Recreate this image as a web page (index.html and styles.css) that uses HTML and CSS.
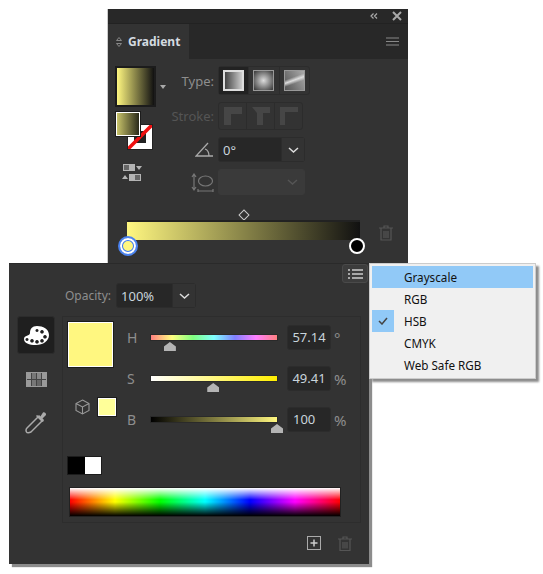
FILE: index.html
```html
<!DOCTYPE html>
<html lang="en">
<head>
    <meta charset="UTF-8">
    <title>Gradient panel</title>
    <link rel="stylesheet" href="styles.css">
</head>
<body>
    <div class="panel gradient-panel">
        <div class="titlebar">
            <svg class="collapse" width="8" height="6" viewBox="0 0 8 6"><path d="M3.5 0.5 L1 3 L3.5 5.5 M7 0.5 L4.5 3 L7 5.5" fill="none" stroke="#aaa" stroke-width="1.2"/></svg>
            <svg class="close" width="10" height="10" viewBox="0 0 10 10"><path d="M1 1 L9 9 M9 1 L1 9" stroke="#aaa" stroke-width="2"/></svg>
        </div>
        <div class="tabbar">
            <div class="tab">
                <svg width="6" height="10" viewBox="0 0 6 10"><path d="M3 0.5 L5.5 3.5 H0.5 Z M3 9.5 L5.5 6.5 H0.5 Z" fill="none" stroke="#888"/></svg>
                <span>Gradient</span>
            </div>
            <svg class="hamburger" width="13" height="9" viewBox="0 0 13 9"><path d="M0 1 H13 M0 4.5 H13 M0 8 H13" stroke="#888" stroke-width="1.2"/></svg>
        </div>

        <div class="grad-top">
            <div class="swatch-col">
                <div class="big-row">
                    <div class="grad-swatch"></div>
                    <span class="caret"></span>
                </div>
                <div class="fill-stroke">
                    <div class="stroke-box">
                        <svg width="24" height="24" viewBox="0 0 24 24"><rect x="6" y="6" width="12" height="12" fill="#222"/><path d="M0 24 L24 0" stroke="#f01010" stroke-width="3.5"/></svg>
                    </div>
                    <div class="fill-box"></div>
                </div>
                <svg class="swap" width="20" height="19" viewBox="0 0 20 19">
                    <rect x="1" y="1" width="12" height="7" fill="#b4b4b4"/><rect x="2" y="2" width="5" height="5" fill="#666"/>
                    <path d="M14 3 H20 L17 7 Z" fill="#b4b4b4"/>
                    <rect x="7" y="11" width="12" height="7" fill="#b4b4b4"/><rect x="13" y="12" width="5" height="5" fill="#666"/>
                    <path d="M0 16 H6 L3 12 Z" fill="#b4b4b4"/>
                </svg>
            </div>
            <div class="controls">
                <label class="ctl-label type-label">Type:</label>
                <div class="btn-group">
                    <div class="type-btn selected"><div class="type-icon linear"></div></div>
                    <div class="type-btn"><div class="type-icon radial"></div></div>
                    <div class="type-btn"><div class="type-icon freeform"></div></div>
                </div>
                <label class="ctl-label stroke-label">Stroke:</label>
                <div class="btn-group disabled">
                    <div class="stroke-btn"><svg width="20" height="20" viewBox="0 0 20 20"><path d="M1 19 V1 H19 V8 H8 V19 Z" fill="#464646"/></svg></div>
                    <div class="stroke-btn"><svg width="20" height="20" viewBox="0 0 20 20"><path d="M1 1 H19 V7 H12 V19 H6 V7 Z" fill="#464646"/></svg></div>
                    <div class="stroke-btn"><svg width="20" height="20" viewBox="0 0 20 20"><path d="M1 19 V1 H19 V6 H6 V19 Z" fill="#464646"/></svg></div>
                </div>
                <svg class="ctl-icon" width="19" height="15" viewBox="0 0 19 15"><path d="M13 1 L1 14 H18 M10 7 C13 8 14 11 14 14" fill="none" stroke="#aaa" stroke-width="1.3"/></svg>
                <div class="combo">
                    <span class="combo-value">0°</span>
                    <span class="combo-arrow"><svg width="11" height="6" viewBox="0 0 11 6"><path d="M1 1 L5.5 5 L10 1" fill="none" stroke="#ddd" stroke-width="1.5"/></svg></span>
                </div>
                <svg class="ctl-icon" width="23" height="19" viewBox="0 0 23 19"><path d="M3 1 V17 M1 4 L3 1 L5 4 M1 14 L3 17 L5 14 M7 18 H22 M7 16 V19 M22 16 V19" fill="none" stroke="#777" stroke-width="1.2"/><ellipse cx="14.500" cy="8" rx="7" ry="5" fill="none" stroke="#777" stroke-width="1.2"/></svg>
                <div class="combo off">
                    <span class="combo-arrow"><svg width="11" height="6" viewBox="0 0 11 6"><path d="M1 1 L5.5 5 L10 1" fill="none" stroke="#555" stroke-width="1.5"/></svg></span>
                </div>
            </div>
        </div>

        <div class="slider-wrap">
            <div class="midpoint"></div>
            <div class="bar-row">
                <div class="grad-bar">
                    <span class="stop stop-start"></span>
                    <span class="stop stop-end"></span>
                </div>
                <svg class="trash" width="14" height="16" viewBox="0 0 14 16"><path d="M0 3 H14 M5 3 V1 H9 V3 M2 3 V15 H12 V3 M5 6 V13 M7 6 V13 M9 6 V13" fill="none" stroke="#555" stroke-width="1.2"/></svg>
            </div>
        </div>
    </div>

    <div class="panel color-panel">
        <div class="list-row">
            <div class="list-btn">
                <svg width="15" height="10" viewBox="0 0 15 10"><path d="M0 1 H2 M4 1 H15 M0 5 H2 M4 5 H15 M0 9 H2 M4 9 H15" stroke="#ccc" stroke-width="1.6"/></svg>
            </div>
        </div>
        <div class="opacity-row">
            <label class="ctl-label opacity-label">Opacity:</label>
            <div class="combo opacity-combo">
                <span class="combo-value">100%</span>
                <span class="combo-arrow"><svg width="11" height="6" viewBox="0 0 11 6"><path d="M1 1 L5.500 5 L10 1" fill="none" stroke="#ddd" stroke-width="1.5"/></svg></span>
            </div>
        </div>
        <div class="main-row">
            <div class="side-nav">
                <div class="nav-btn selected">
                    <svg width="25" height="19" viewBox="0 0 25 19">
                        <path fill="#fff" fill-rule="evenodd" d="M13 0 C19 0 25 3 25 9 C25 15 19 19 12 19 C5 19 0 17 0 13 C0 9 6 10 6 7 C6 3 8 0 13 0 Z M13 3 a1.500 1.500 0 1 0 .01 0 Z M18 4 a1.800 1.800 0 1 0 .01 0 Z M21 9 a1.800 1.800 0 1 0 .01 0 Z M18 13 a1.800 1.800 0 1 0 .01 0 Z M13 14 a1.800 1.800 0 1 0 .01 0 Z M8 13 a1.800 1.800 0 1 0 .01 0 Z M3 12 a1.500 1.500 0 1 0 .01 0 Z"/>
                    </svg>
                </div>
                <div class="nav-grid">
                    <span></span><span class="mid"></span><span class="soft"></span><span></span>
                    <span></span><span class="mid"></span><span class="deep"></span><span></span>
                </div>
                <svg class="dropper" width="22" height="23" viewBox="0 0 22 23"><path d="M14 5 L18 9 L6 21 C4 22 2 22 1.500 21 C1 20 1 18 2 17 Z" fill="none" stroke="#aaa" stroke-width="1.5"/><path d="M12 4 L15 6 L18 1.500 C19 0.500 21.500 2 21 4 L17 8 L19 10 L17 11 L11 5 Z" fill="#aaa"/></svg>
            </div>
            <div class="color-box">
                <div class="color-top">
                    <div class="preview-col">
                        <div class="big-color"></div>
                        <div class="websafe">
                            <svg width="15" height="16" viewBox="0 0 15 16"><path d="M7.500 1 L14 4.500 V11.500 L7.500 15 L1 11.500 V4.500 Z M1 4.500 L7.500 8 L14 4.500 M7.500 8 V15" fill="none" stroke="#999" stroke-width="1.100"/></svg>
                            <div class="small-color"></div>
                        </div>
                    </div>
                    <div class="sliders">
                        <div class="slider-row">
                            <span class="chan">H</span>
                            <div class="track hue"><span class="thumb" style="left: 15%"></span></div>
                            <div class="num">57.14</div>
                            <span class="unit">°</span>
                        </div>
                        <div class="slider-row">
                            <span class="chan">S</span>
                            <div class="track sat"><span class="thumb" style="left: 49.41%"></span></div>
                            <div class="num">49.41</div>
                            <span class="unit">%</span>
                        </div>
                        <div class="slider-row">
                            <span class="chan">B</span>
                            <div class="track bri"><span class="thumb" style="left: 100%"></span></div>
                            <div class="num num-left">100</div>
                            <span class="unit">%</span>
                        </div>
                    </div>
                </div>
                <div class="bw"><span class="bw-black"></span><span class="bw-white"></span></div>
                <div class="spectrum"></div>
            </div>
        </div>
        <div class="footer">
            <svg width="14" height="14" viewBox="0 0 14 14"><rect x="0.500" y="0.500" width="13" height="13" fill="none" stroke="#aaa"/><path d="M7 3.500 V10.500 M3.500 7 H10.500" stroke="#ccc" stroke-width="1.500"/></svg>
            <svg width="14" height="15" viewBox="0 0 14 15"><path d="M0 3 H14 M5 3 V1 H9 V3 M2 3 V14.500 H12 V3 M5 6 V12.500 M7 6 V12.500 M9 6 V12.500" fill="none" stroke="#555" stroke-width="1.200"/></svg>
        </div>
    </div>

    <div class="menu">
        <div class="menu-item active"><span class="check"></span>Grayscale</div>
        <div class="menu-item"><span class="check"></span>RGB</div>
        <div class="menu-item"><span class="check on"><svg width="10" height="8" viewBox="0 0 10 8"><path d="M1 4 L4 7 L9 1" fill="none" stroke="#444" stroke-width="1.500"/></svg></span>HSB</div>
        <div class="menu-item"><span class="check"></span>CMYK</div>
        <div class="menu-item"><span class="check"></span>Web Safe RGB</div>
    </div>
</body>
</html>
```

FILE: styles.css
```css
* {
    box-sizing: border-box;
}
body {
    margin: 0;
    background-color: white;
    font-family: "Noto Sans", Arial, sans-serif;
    font-size: 12px;
    overflow: hidden;
}
.panel {
    position: absolute;
    background-color: #333;
}
svg {
    display: block;
    flex: none;
}

/* top panel */
.gradient-panel {
    left: 108px;
    top: 9px;
    width: 300px;
    height: 255px;
    box-shadow: -1px 0 0 #ccc;
}
.titlebar {
    display: flex;
    justify-content: flex-end;
    align-items: center;
    gap: 14px;
    height: 15px;
    padding-right: 6px;
    background-color: #282828;
    border-bottom: 1px solid #222;
}
.tabbar {
    display: flex;
    justify-content: space-between;
    align-items: center;
    height: 35px;
    padding-right: 9px;
    background-color: #282828;
}
.tab {
    display: flex;
    align-items: center;
    gap: 6px;
    width: 81px;
    height: 100%;
    padding-left: 8px;
    background-color: #333;
    color: #d4dbe0;
    font-weight: bold;
}
.grad-top {
    display: flex;
    padding: 7px 0 0 7px;
    height: 136px;
}
.swatch-col {
    width: 54px;
}
.big-row {
    display: flex;
    align-items: center;
    gap: 4px;
}
.grad-swatch {
    width: 41px;
    height: 41px;
    border: 2px solid #1c1c1c;
    background: linear-gradient(to right, #fff780, #111);
}
.caret {
    width: 0;
    height: 0;
    border-left: 3.5px solid transparent;
    border-right: 3.5px solid transparent;
    border-top: 4px solid #aaa;
}
.fill-stroke {
    position: relative;
    width: 37px;
    height: 37px;
    margin: 5px 0 0 1px;
}
.fill-box {
    position: absolute;
    left: 0;
    top: 0;
    width: 24px;
    height: 24px;
    border: 1px solid white;
    outline: 1px solid #1c1c1c;
    background: linear-gradient(to right, #c8c36a, #2a2a1a);
}
.stroke-box {
    position: absolute;
    left: 12px;
    top: 13px;
    width: 24px;
    height: 24px;
    background-color: white;
    outline: 1px solid #222;
}
.swap {
    margin: 14px 0 0 7px;
}
.controls {
    display: grid;
    grid-template-columns: 45px 87px;
    grid-template-rows: 29px 28px 25px 26px;
    column-gap: 4px;
    row-gap: 7px;
    align-items: center;
    justify-items: end;
}
.ctl-label {
    color: #8e8e8e;
    font-size: 13px;
}
.stroke-label {
    color: #555;
}
.btn-group {
    display: flex;
    justify-self: start;
    width: 92px;
    height: 29px;
    border: 1px solid #2c2c2c;
    border-radius: 3px;
}
.btn-group.disabled {
    width: 85px;
    height: 28px;
}
.type-btn {
    display: flex;
    justify-content: center;
    align-items: center;
    flex: 1;
    border-right: 1px solid #2c2c2c;
}
.type-btn:last-child,
.stroke-btn:last-child {
    border-right: none;
}
.type-btn.selected {
    background-color: #222;
}
.type-icon {
    width: 21px;
    height: 21px;
    border: 1px solid #999;
}
.linear {
    border: 2px solid #ddd;
    background: linear-gradient(to right, #444, #ccc);
}
.radial {
    background: radial-gradient(circle, #ddd, #444 90%);
}
.freeform {
    background:
        linear-gradient(160deg, transparent 35%, #ddd 48%, transparent 62%),
        linear-gradient(60deg, #555, #aaa);
}
.stroke-btn {
    display: flex;
    justify-content: center;
    align-items: center;
    flex: 1;
    border-right: 1px solid #2c2c2c;
}
.combo {
    display: flex;
    justify-content: space-between;
    align-items: stretch;
    justify-self: start;
    width: 87px;
    height: 25px;
    background-color: #272727;
    border: 1px solid #2c2c2c;
    border-radius: 3px;
    color: #c9d4dc;
    font-size: 13px;
}
.combo-value {
    align-self: center;
    padding-left: 4px;
}
.combo-arrow {
    display: flex;
    justify-content: center;
    align-items: center;
    width: 23px;
    background-color: #333;
    border-left: 1px solid #2c2c2c;
}
.combo.off {
    justify-content: flex-end;
    background-color: #3a3a3a;
    border-color: #3a3a3a;
    height: 26px;
}
.combo.off .combo-arrow {
    background-color: transparent;
    border: none;
}

.slider-wrap {
    margin: 16px 0 0 19px;
}
.midpoint {
    width: 8px;
    height: 8px;
    margin: 0 0 1px 113px;
    border: 1.5px solid #ccc;
    transform: rotate(45deg);
}
.bar-row {
    display: flex;
    gap: 19px;
}
.grad-bar {
    position: relative;
    width: 233px;
    height: 20px;
    border-top: 2px solid #222;
    background: linear-gradient(to right, #fff780, #111);
}
.stop {
    position: absolute;
    border-radius: 50%;
}
.stop-start {
    left: -9px;
    top: 14px;
    width: 20px;
    height: 20px;
    background-color: #fff780;
    border: 2px solid #4a82f0;
    box-shadow: inset 0 0 0 2px white, inset 0 0 0 3px #3b78f0;
}
.stop-end {
    left: 222px;
    top: 16px;
    width: 16px;
    height: 16px;
    background-color: black;
    border: 2px solid white;
}
.trash {
    margin-top: 5px;
}

/* lower panel */
.color-panel {
    left: 9px;
    top: 263px;
    width: 360px;
    height: 301px;
    border-top: 1px solid #2a2a2a;
    box-shadow: 3px 3px 1px #8c8c8c;
}
.list-row {
    display: flex;
    justify-content: flex-end;
    padding-right: 1px;
}
.list-btn {
    display: flex;
    justify-content: center;
    align-items: center;
    width: 26px;
    height: 19px;
    background-color: #3c3c3c;
    border: 1px solid #4a4a4a;
    border-radius: 3px;
}
.opacity-row {
    display: flex;
    align-items: center;
    gap: 5px;
    padding-left: 56px;
}
.opacity-label {
    font-size: 12px;
}
.opacity-combo {
    width: 80px;
}
.main-row {
    display: flex;
    gap: 7px;
    margin-top: 8px;
    padding-left: 8px;
}
.side-nav {
    display: flex;
    flex-direction: column;
    align-items: center;
    width: 38px;
}
.nav-btn {
    display: flex;
    justify-content: center;
    align-items: center;
    width: 38px;
    height: 38px;
    border-radius: 3px;
}
.nav-btn.selected {
    background-color: #1f1f1f;
    border: 1px solid #2c2c2c;
}
.nav-grid {
    display: grid;
    grid-template-columns: repeat(4, 4px);
    grid-template-rows: repeat(2, 6px);
    gap: 1px;
    margin-top: 19px;
    background-color: #444;
    outline: 1px solid #999;
}
.nav-grid span {
    background-color: #999;
}
.nav-grid .mid {
    background-color: #777;
}
.nav-grid .soft {
    background-color: #888;
}
.nav-grid .deep {
    background-color: #666;
}
.dropper {
    margin-top: 25px;
}
.color-box {
    width: 299px;
    height: 207px;
    padding: 5px 0 0 5px;
    border: 1px solid #2d2d2d;
}
.color-top {
    display: flex;
}
.preview-col {
    width: 59px;
}
.big-color {
    width: 45px;
    height: 45px;
    background-color: #fff780;
    border: 1px solid white;
    outline: 1px solid #1c1c1c;
}
.websafe {
    display: flex;
    align-items: center;
    gap: 8px;
    margin: 31px 0 0 7px;
}
.small-color {
    width: 18px;
    height: 18px;
    background-color: #ffff99;
    border: 1px solid white;
    outline: 1px solid #1c1c1c;
}
.sliders {
    display: flex;
    flex-direction: column;
    gap: 16px;
    margin-top: 3px;
}
.slider-row {
    display: flex;
    align-items: center;
    height: 25px;
}
.chan {
    width: 24px;
    color: #8e8e8e;
    font-size: 14px;
}
.track {
    position: relative;
    width: 126px;
    height: 5px;
    margin-right: 10px;
    outline: 1px solid #2a2a2a;
}
.hue {
    background: linear-gradient(to right, #ff8080, #ffff80, #80ff80, #80ffff, #8080ff, #ff80ff, #ff8080);
}
.sat {
    background: linear-gradient(to right, white, #ffee00);
}
.bri {
    background: linear-gradient(to right, black, #fff780);
}
.thumb {
    position: absolute;
    top: 7px;
    width: 12px;
    height: 9px;
    margin-left: -6px;
    background-color: #b4b4b4;
    clip-path: polygon(50% 0, 100% 50%, 100% 100%, 0 100%, 0 50%);
}
.num {
    width: 44px;
    height: 25px;
    line-height: 23px;
    text-align: center;
    background-color: #272727;
    border: 1px solid #2c2c2c;
    border-radius: 3px;
    color: #c9d4dc;
    font-size: 13px;
}
.num-left {
    text-align: left;
    padding-left: 5px;
}
.unit {
    margin-left: 3px;
    color: #8e8e8e;
    font-size: 15px;
}
.bw {
    display: flex;
    width: 33px;
    height: 17px;
    margin-top: 25px;
    outline: 1px solid #1c1c1c;
}
.bw span {
    flex: 1;
}
.bw-black {
    background-color: black;
}
.bw-white {
    background-color: white;
}
.spectrum {
    width: 272px;
    height: 30px;
    margin: 13px 0 0 1px;
    border: 1px solid #222;
    background:
        linear-gradient(to bottom, white, transparent 42%, transparent 50%, black),
        linear-gradient(to right, red, yellow, lime, cyan, blue, magenta, red);
}
.footer {
    display: flex;
    justify-content: flex-end;
    gap: 17px;
    margin-top: 13px;
    padding-right: 17px;
}

/* popup menu */
.menu {
    position: absolute;
    left: 369px;
    top: 263px;
    width: 167px;
    height: 116px;
    padding: 2px 2px 0;
    background-color: #f0f0f0;
    border: 1px solid #ccc;
    box-shadow: 3px 3px 2px #8c8c8c;
    color: #111;
    font-size: 11.7px;
}
.menu-item {
    display: flex;
    align-items: center;
    gap: 10px;
    height: 22px;
}
.menu-item.active {
    background-color: #91c9f7;
}
.check {
    display: flex;
    justify-content: center;
    align-items: center;
    width: 22px;
    height: 22px;
}
.check.on {
    background-color: #91c9f7;
}
```
